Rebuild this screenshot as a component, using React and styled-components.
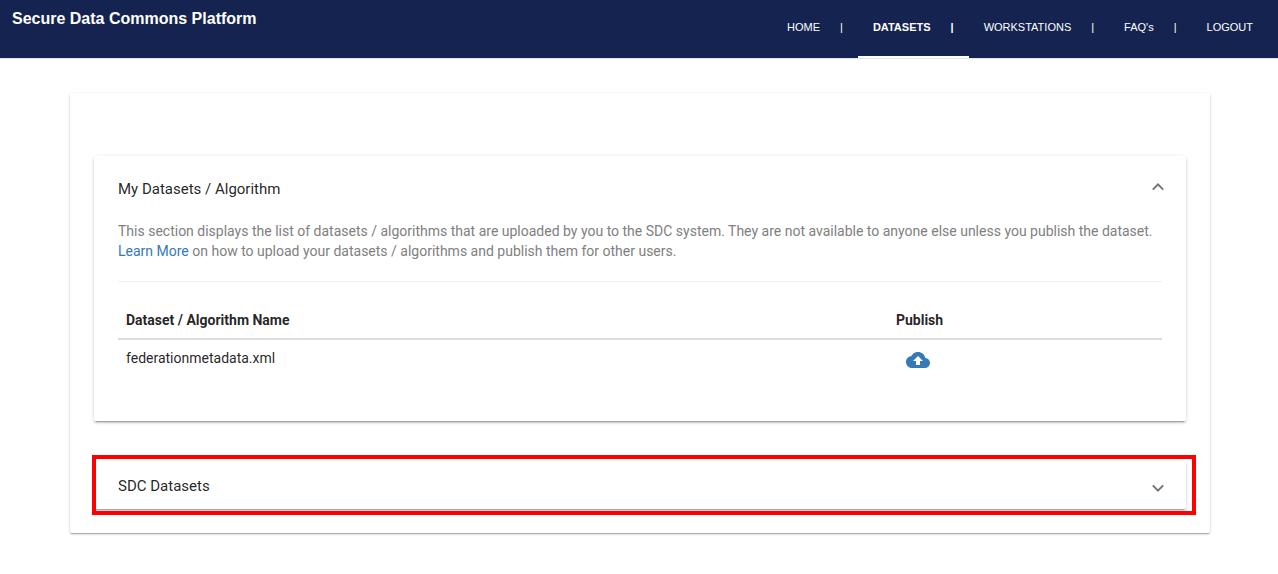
import React, { useState } from "react";
import styled, { createGlobalStyle } from "styled-components";

const GlobalStyle = createGlobalStyle`
  * { box-sizing: border-box; }
  body {
    margin: 0;
    background: #fff;
    color: rgba(0, 0, 0, 0.87);
    font: 14px/20px Roboto, "Liberation Sans", sans-serif;
  }
`;

const Header = styled.header`
  display: flex;
  justify-content: space-between;
  height: 59px;
  padding: 0 10px 0 12px;
  background: #152350;
  border-bottom: 1px solid #e7e7e7;
  font-family: "Liberation Sans", Arial, sans-serif;
`;

const Brand = styled.h1`
  margin: 9px 0 0;
  color: #fff;
  font-size: 16px;
  line-height: 20px;
  font-weight: bold;
`;

const Nav = styled.nav`
  display: flex;
`;

const NavLink = styled.a`
  display: flex;
  gap: 20px;
  padding: 17px 15px 0;
  border-bottom: 2px solid ${(p) => (p.$active ? "#fff" : "transparent")};
  color: #fff;
  font-size: 11px;
  line-height: 20px;
  font-weight: ${(p) => (p.$active ? "bold" : "normal")};
  text-decoration: none;
  white-space: nowrap;
`;

const Card = styled.section`
  background: #fff;
  border-radius: 2px;
  box-shadow: 0 3px 1px -2px rgba(0, 0, 0, 0.2),
    0 2px 2px 0 rgba(0, 0, 0, 0.14), 0 1px 5px 0 rgba(0, 0, 0, 0.12);
`;

const Page = styled.main`
  display: flex;
  flex-direction: column;
  gap: 40px;
  margin: 34px 68px 40px 70px;
  padding: 63px 24px 24px;
  border-radius: 2px;
  box-shadow: 0 1px 3px 0 rgba(0, 0, 0, 0.2),
    0 1px 1px 0 rgba(0, 0, 0, 0.14), 0 2px 1px -1px rgba(0, 0, 0, 0.12);
`;

const Highlight = styled.div`
  position: relative;

  &::after {
    content: "";
    position: absolute;
    inset: -6px -10px -6px -2px;
    border: 4px solid #f00;
    pointer-events: none;
  }
`;

const PanelTitle = styled.h2`
  margin: 0;
  font-size: 15px;
  font-weight: normal;
`;

const PanelToggle = styled.button`
  display: flex;
  align-items: center;
  justify-content: space-between;
  width: 100%;
  height: ${(p) => (p.$open ? 64 : 48)}px;
  padding: 2px 22px 0 24px;
  border: 0;
  background: none;
  color: inherit;
  font: inherit;
  line-height: 20px;
  text-align: left;
  cursor: pointer;
`;

const Chevron = styled.svg`
  width: 12px;
  height: 12px;
  fill: none;
  stroke: #757575;
  stroke-width: 2;
`;

const PanelBody = styled.div`
  padding: 1px 24px 41px;
`;

const Description = styled.p`
  margin: 0;
  padding-bottom: 20px;
  border-bottom: 1px solid #eee;
  color: #808080;
`;

const TextLink = styled.a`
  color: #337ab7;
  text-decoration: none;
`;

const Table = styled.table`
  width: 100%;
  margin-top: 20px;
  border-collapse: separate;
  border-spacing: 0;
  table-layout: fixed;
`;

const HeadCell = styled.th`
  width: ${(p) => p.$width};
  padding: 8px;
  border-bottom: 2px solid #ddd;
  font-weight: bold;
  text-align: left;
`;

const Cell = styled.td`
  padding: 8px;
  vertical-align: top;
`;

const PublishButton = styled.button`
  display: block;
  margin-left: 10px;
  padding: 0;
  border: 0;
  background: none;
  color: #337ab7;
  cursor: pointer;
`;

const CloudIcon = styled.svg`
  display: block;
  width: 24px;
  height: 24px;
  fill: currentColor;
`;

const links = ["HOME", "DATASETS", "WORKSTATIONS", "FAQ's", "LOGOUT"];

function Panel({ title, defaultOpen = false, children }) {
  const [open, setOpen] = useState(defaultOpen);
  return (
    <Card>
      <PanelTitle>
        <PanelToggle
          $open={open}
          aria-expanded={open}
          onClick={() => setOpen(!open)}
        >
          {title}
          <Chevron viewBox="0 0 12 12" aria-hidden="true">
            <path d={open ? "M.8 6.6 6 1.4 11.2 6.6" : "M.8 5.4 6 10.6 11.2 5.4"} />
          </Chevron>
        </PanelToggle>
      </PanelTitle>
      {open && children && <PanelBody>{children}</PanelBody>}
    </Card>
  );
}

export default function App() {
  return (
    <>
      <GlobalStyle />
      <Header>
        <Brand>Secure Data Commons Platform</Brand>
        <Nav>
          {links.map((label, i) => (
            <NavLink key={label} href="#" $active={label === "DATASETS"}>
              <span>{label}</span>
              {i < links.length - 1 && <span>|</span>}
            </NavLink>
          ))}
        </Nav>
      </Header>
      <Page>
        <Panel title="My Datasets / Algorithm" defaultOpen>
          <Description>
            This section displays the list of datasets / algorithms that are
            uploaded by you to the SDC system. They are not available to anyone
            else unless you publish the dataset.{" "}
            <TextLink href="#">Learn More</TextLink> on how to upload your
            datasets / algorithms and publish them for other users.
          </Description>
          <Table>
            <thead>
              <tr>
                <HeadCell $width="73.75%">Dataset / Algorithm Name</HeadCell>
                <HeadCell>Publish</HeadCell>
              </tr>
            </thead>
            <tbody>
              <tr>
                <Cell>federationmetadata.xml</Cell>
                <Cell>
                  <PublishButton aria-label="Publish federationmetadata.xml">
                    <CloudIcon viewBox="0 0 24 24" aria-hidden="true">
                      <path d="M19.35 10.04C18.67 6.59 15.64 4 12 4 9.11 4 6.6 5.64 5.35 8.04 2.34 8.36 0 10.91 0 14c0 3.31 2.69 6 6 6h13c2.76 0 5-2.24 5-5 0-2.64-2.05-4.78-4.65-4.96zM14 13v4h-4v-4H7l5-5 5 5h-3z" />
                    </CloudIcon>
                  </PublishButton>
                </Cell>
              </tr>
            </tbody>
          </Table>
        </Panel>
        <Highlight>
          <Panel title="SDC Datasets" />
        </Highlight>
      </Page>
    </>
  );
}
